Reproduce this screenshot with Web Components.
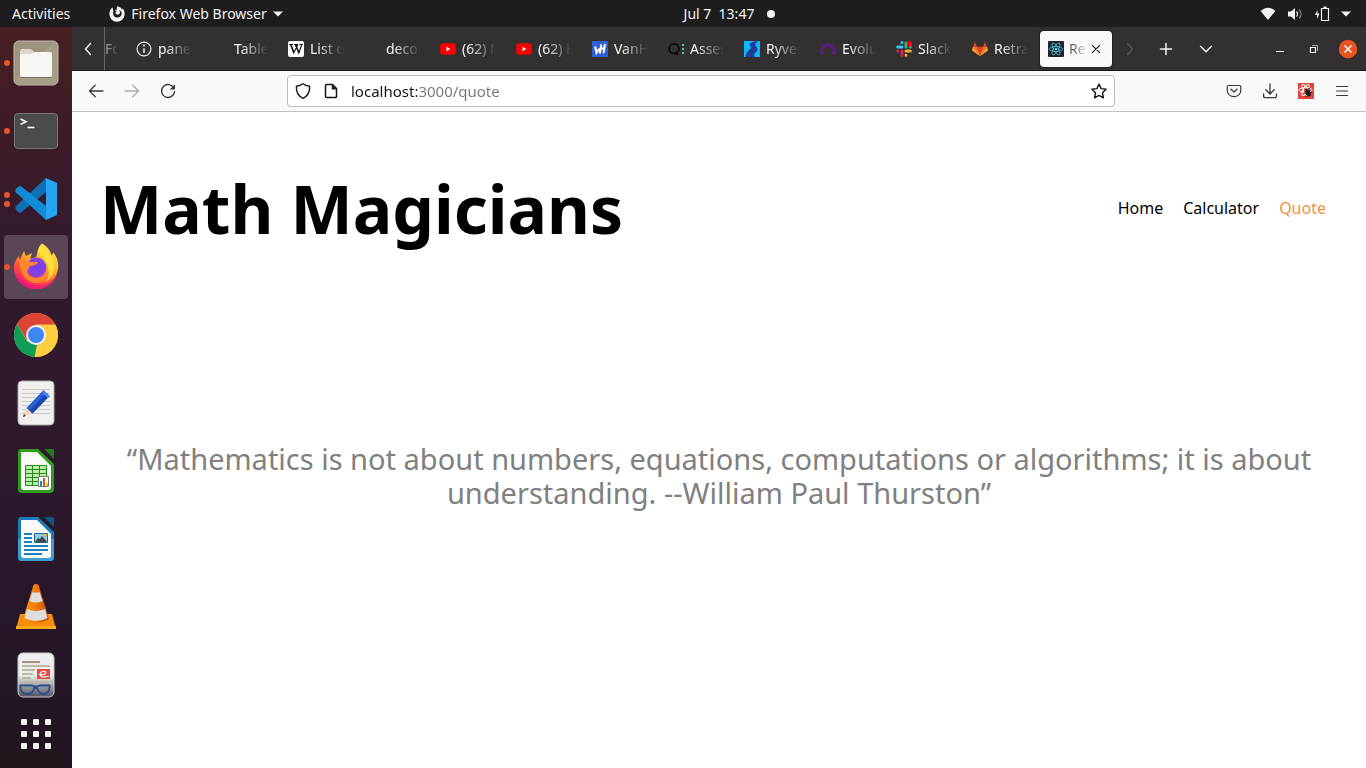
<!DOCTYPE html>
<html lang="en">
<head>
<meta charset="utf-8">
<meta name="viewport" content="width=device-width, initial-scale=1">
<title>Math Magicians</title>
<style>
  html, body { height: 100%; margin: 0; }
  body { font-family: "Noto Sans", "Open Sans", sans-serif; font-size: 14px; }
</style>
</head>
<body>
<desktop-shell></desktop-shell>

<script>
const ICONS = {
  back: ['0 0 16 16', '<path d="M7.2 2.2 1.5 8l5.700 5.800M1.500 8H15" fill="none" stroke="currentColor" stroke-width="1.300" stroke-linecap="round" stroke-linejoin="round"/>'],
  forward: ['0 0 16 16', '<path d="M8.800 2.200 14.500 8l-5.700 5.800M14.500 8H1" fill="none" stroke="currentColor" stroke-width="1.300" stroke-linecap="round" stroke-linejoin="round"/>'],
  reload: ['0 0 16 16', '<path d="M13.800 5A6.500 6.500 0 1 0 14.500 8.800" fill="none" stroke="currentColor" stroke-width="1.400" stroke-linecap="round"/><path d="M15 1.200V6.500H9.700z" fill="currentColor"/>'],
  shield: ['0 0 16 16', '<path d="M8 .8C10 2.300 12 3 14.600 3.300 15 8.600 13 13 8 15.300 3 13 1 8.600 1.400 3.300 4 3 6 2.300 8 .8z" fill="none" stroke="currentColor" stroke-width="1.400" stroke-linejoin="round"/>'],
  page: ['0 0 16 16', '<path d="M3.500 1.500h6l4 4v8a1 1 0 0 1-1 1h-9a1 1 0 0 1-1-1v-11a1 1 0 0 1 1-1z" fill="none" stroke="currentColor" stroke-width="1.500"/><path d="M8.800 1.500v5h5z" fill="currentColor"/>'],
  star: ['0 0 16 16', '<path d="m8 1.100 2.100 4.500 5 .7-3.600 3.500.9 5L8 12.400l-4.400 2.400.9-5L.9 6.300l5-.7z" fill="none" stroke="currentColor" stroke-width="1.400" stroke-linejoin="round"/>'],
  pocket: ['0 0 16 16', '<path d="M2.500 2.500h11a1.300 1.300 0 0 1 1.300 1.300v4a6.800 5.800 0 0 1-13.600 0v-4a1.300 1.300 0 0 1 1.300-1.300z" fill="none" stroke="currentColor" stroke-width="1.200"/><path d="M5 6.300 8 9l3-2.700" fill="none" stroke="currentColor" stroke-width="1.300" stroke-linecap="round" stroke-linejoin="round"/>'],
  download: ['0 0 16 16', '<path d="M8 .8v10M3.800 6.800 8 11l4.200-4.200M1.600 11v2.200a1.400 1.400 0 0 0 1.400 1.400h10a1.400 1.400 0 0 0 1.400-1.400V11" fill="none" stroke="currentColor" stroke-width="1.300" stroke-linecap="round" stroke-linejoin="round"/>'],
  menu: ['0 0 16 16', '<path d="M2.500 3.500h11M2.500 8h11M2.500 12.500h11" fill="none" stroke="currentColor" stroke-width="1.200" stroke-linecap="round"/>'],
  extension: ['0 0 16 16', '<path fill="#e0443a" d="M0 0h16v16H0z"/><g fill="none" stroke="#fff" stroke-width="1"><ellipse cx="7.500" cy="7" rx="6.500" ry="2.400"/><ellipse cx="7.500" cy="7" rx="6" ry="2.300" transform="rotate(60 7.500 7)"/><ellipse cx="7.500" cy="7" rx="6" ry="2.300" transform="rotate(-60 7.500 7)"/></g><path d="m7 7 2-1.500 2.500 2 1.500 3-.5 2.500-2.500.5L7.500 11z" fill="#241614"/><path d="m6 9.500 2 1m2-4.500 2-1m0 5 2-1m-5.500 4-1 1" stroke="#241614"/>'],
  left: ['0 0 16 16', '<path d="m10.500 2.500-5 5.500 5 5.500" fill="none" stroke="currentColor" stroke-width="1.400" stroke-linecap="round" stroke-linejoin="round"/>'],
  right: ['0 0 16 16', '<path d="m5.500 2.500 5 5.500-5 5.500" fill="none" stroke="currentColor" stroke-width="1.400" stroke-linecap="round" stroke-linejoin="round"/>'],
  down: ['0 0 16 16', '<path d="m2.500 5.200 5.500 5.500 5.500-5.500" fill="none" stroke="currentColor" stroke-width="1.400" stroke-linecap="round" stroke-linejoin="round"/>'],
  plus: ['0 0 16 16', '<path d="M8 2.500v11M2.500 8h11" fill="none" stroke="currentColor" stroke-width="1.500" stroke-linecap="round"/>'],
  minimize: ['0 0 16 16', '<path d="M4 10h8v1H4z" fill="currentColor"/>'],
  restore: ['0 0 16 16', '<path d="M4.500 6.500h5v5h-5z" fill="none" stroke="currentColor" stroke-width="1.200"/><path d="M6 4.500h5.500V10" fill="none" stroke="currentColor" stroke-opacity=".6"/>'],
  close: ['0 0 18 18', '<circle cx="9" cy="9" r="9.200" fill="#e95420"/><path d="m5.500 5.500 7 7m0-7-7 7" stroke="#fff" stroke-width="1.500"/>'],
  cross: ['0 0 16 16', '<path d="m4.300 4.300 7.400 7.400m0-7.400-7.400 7.400" stroke="currentColor" stroke-width="1.100" stroke-linecap="round"/>'],
  caret: ['0 0 10 6', '<path d="M0 .5h10L5 5.500z" fill="currentColor"/>'],
  wifi: ['0 0 16 16', '<path d="M.6 4.900Q8-1.200 15.400 4.900L8 14z" fill="currentColor"/>'],
  volume: ['0 0 16 16', '<path d="M1 5.500h3L8 2v12l-4-3.500H1z" fill="currentColor"/><path d="M9.500 5.500a3.500 3.500 0 0 1 0 5" fill="none" stroke="currentColor" stroke-width="1.200"/><path d="M12 3.500a6 6 0 0 1 0 9" fill="none" stroke="currentColor" stroke-opacity=".5" stroke-width="1.200"/>'],
  battery: ['0 0 16 16', '<path d="M7.500 2.500h7v12h-7z" fill="none" stroke="currentColor" stroke-width="1.200"/><path d="M9.500.5h3v2h-3zM3.500 4 1 9h2v4l2.500-5.500h-2z" fill="currentColor"/>'],
  firefoxMono: ['0 0 16 16', '<path d="M8.500.3c-1 1-.9 2.200-.4 3.100-1.600-.1-2.300.7-2.400 1.400h2.200c-.3.800-1.500 1-1.400 2 0 2.400 4 2.200 4.400.1.300-1.400-.5-2-1.200-2.300 1.500-.2 3 .9 3 3 0 2-1.500 3.800-3.900 4C6.200 11.700 4 10 4.200 7.200 4.200 5.300 4.500 3 3.400 1.500 1.500 2.800.3 5.500.4 8a7.600 7.600 0 0 0 15.200.4c.1-2.500-.7-4.800-2.200-6.300.2.800.2 1.200 0 1.900C12.300 1.700 10.100.6 8.500.3z" fill="currentColor"/>'],
  info: ['0 0 16 16', '<circle cx="8" cy="8" r="6.900" fill="none" stroke="currentColor" stroke-width="1.200"/><path d="M8 7.200V12" stroke="currentColor" stroke-width="1.500"/><circle cx="8" cy="4.600" r="1" fill="currentColor"/>'],
  wiki: ['0 0 16 16', '<rect width="16" height="16" rx="2" fill="#fff"/><path d="M1.200 3.500h4M6.200 3.500h4M11.500 3.500h3.300M2.500 3.500l3.200 8.500L9.700 4M7.300 3.500l3.500 8.500L13.800 3.500" fill="none" stroke="#111" stroke-width="1.100"/><path d="m2.800 3.500 3.200 8M7.500 3.500l3.400 8" stroke="#111" stroke-width="1.300"/>'],
  youtube: ['0 0 16 16', '<rect x=".2" y="2.300" width="15.600" height="11.400" rx="3" fill="#f00"/><path d="M6.500 5.700v4.600L10.300 8z" fill="#fff"/>'],
  hack: ['0 0 16 16', '<path fill="#2e5fd3" d="M0 0h16v16H0z"/><path d="M3.200 5.500 4.500 12 7.500 7.500M9.300 3.500 7.800 12.500M13 3 11.500 12.200M8.500 8.500 12 6.500" fill="none" stroke="#fff" stroke-width="2"/>'],
  quality: ['0 0 16 16', '<circle cx="6" cy="7.800" r="4.900" fill="none" stroke="#080808" stroke-width="1.700"/><path d="m6.500 11 3.500 2.800" stroke="#080808" stroke-width="1.500"/><path d="M14 3h2v2h-2zM14 7h2v2h-2zM14 11h2v2h-2z" fill="#41d77a"/>'],
  ryver: ['0 0 16 16', '<path fill="#06b9fc" d="M0 0h16v16H0z"/><path d="M15 0C7 0 4 3 6.500 5.500 9 8 2 9 1.500 16H11c-3-4 3-5 2.500-8S8 4 15 0z" fill="#233d94"/>'],
  arc: ['0 0 16 16', '<path d="M2 13.500V10a6 6 0 0 1 12 0v3.500" fill="none" stroke="#621b86" stroke-width="3.400" stroke-dasharray="3 .7"/>'],
  slack: ['0 0 16 16', '<g stroke-width="3" stroke-linecap="round"><path d="M6 1.600v0M6 6H1.700" stroke="#36c5f0"/><path d="M10 2v4M14.300 6v0" stroke="#2eb67d"/><path d="M10 10h4.300M10 14.300v0" stroke="#ecb22e"/><path d="M1.700 10v0M6 10v4.300" stroke="#e01e5a"/></g><circle cx="13.500" cy="2.700" r="2.700" fill="#f00"/>'],
  gitlab: ['0 0 16 16', '<path d="m8 15 3-9.200H5z" fill="#e24329"/><path d="M8 15 .2 9.400 1 5.800h4zM8 15l7.800-5.600-.8-3.600h-4z" fill="#fc6d26"/><path d="M8 15 .1 9.600l.9-3.700zM8 15l7.900-5.400-.9-3.700z" fill="#fca326"/><path d="M3 1 1 6h4zM13 1l2 5h-4z" fill="#e24329"/>'],
  react: ['0 0 16 16', '<rect width="16" height="16" rx="1" fill="#20232a"/><g fill="none" stroke="#4bbbd5" stroke-width=".8"><ellipse cx="8" cy="8" rx="6.700" ry="2.500"/><ellipse cx="8" cy="8" rx="6.700" ry="2.500" transform="rotate(60 8 8)"/><ellipse cx="8" cy="8" rx="6.700" ry="2.500" transform="rotate(-60 8 8)"/></g><circle cx="8" cy="8" r="1.300" fill="#61dafb"/>'],
  blank: ['0 0 16 16', ''],

  files: ['0 0 48 48', '<rect x="2" y="2" width="44" height="44" rx="5" fill="#9d947f" stroke="#c2bba9"/><path d="M3 40 42 3h3v42H3z" fill="#aba38e" opacity=".6"/><path d="M8 12a2 2 0 0 1 2-2h9l4 4v6H8z" fill="#dbd7c9"/><path d="M8 17q0-2 2-2h9l4-2h15q2 0 2 2v21q0 2-2 2H10q-2 0-2-2z" fill="#f8f7f5"/><path d="M9 38.500h30" stroke="#77705f"/>'],
  terminal: ['0 0 48 48', '<rect x="2.500" y="6.500" width="43" height="35" rx="3.500" fill="#4b4b4b" stroke="#777"/><path d="m8.500 12 5.500 2.700-5.500 2.700" fill="none" stroke="#fff" stroke-width="1.600"/><path d="M15.500 20.500h7" stroke="#fff" stroke-width="1.600"/>'],
  vscode: ['0 0 48 48', '<path d="M34 3 3.500 31.500v3L7 37.500q1 .5 2 0L34 17z" fill="#0f6fb5"/><path d="M34 45 3.500 17v-3L7 11.300q1-.5 2 0L34 31z" fill="#128bd5"/><path d="M34 3 45 8v32l-11 5z" fill="#26a5f2"/>'],
  firefox: ['0 0 48 48', '<defs><linearGradient id="fa" x1=".85" y1="0" x2=".25" y2="1"><stop stop-color="#fff14a"/><stop offset=".45" stop-color="#ffab27"/><stop offset=".7" stop-color="#ff5038"/><stop offset="1" stop-color="#f0147c"/></linearGradient><radialGradient id="fb"><stop stop-color="#713ee8"/><stop offset="1" stop-color="#8f43dc"/></radialGradient></defs><path d="M30 .5c7 4 9 9 9.500 12l2-3C45 14 47 20 46 26c-2 13-11 20-22 20C11 46 2 36 2 26c0-6 2-10 5-13l.500 4L12 8l2 5 6-3-2 6 6-2c2-3 0-7 6-13.500z" fill="url(#fa)"/><path d="M2.500 29C5 40 14 46 24 46c12 0 20-7 22-18-5 12-15 16-24 14S7 36 2.500 29z" fill="#ef137d" opacity=".65"/><circle cx="24.500" cy="24.500" r="10" fill="url(#fb)"/><path d="M8 17q6-1 9 2h9q-2 4-8 4l-3 5q1 7 9 7 9 0 11-9 2 15-11 14C12 39 7 28 8 17z" fill="#ff862f"/><path d="M29 1q-4 6-2 10 6 4 9 13 3 10-4 16 12-7 10-19C41 11 33 8 29 1z" fill="#ffe63f" opacity=".8"/>'],
  chrome: ['0 0 48 48', '<circle cx="24" cy="24" r="22" fill="#ffcd40"/><path d="M24 2a22 22 0 0 1 19.300 11.500H24l-9 16L5 13A22 22 0 0 1 24 2z" fill="#db4437"/><path d="M4.900 13 14.900 30 25 34l-2.500 12A22 22 0 0 1 4.900 13z" fill="#0f9d58"/><path d="M24 14h19.500A22 22 0 0 1 22.500 46l10-17z" fill="#ffcd40"/><circle cx="24" cy="24" r="10" fill="#f1f1f1"/><circle cx="24" cy="24" r="8" fill="#4285f4"/>'],
  editor: ['0 0 48 48', '<rect x="6" y="2" width="36" height="44" rx="4" fill="#f0f0ef" stroke="#aaa"/><path d="M10 10.500h28M10 14.500h28M10 18.500h28M10 22.500h28M10 26.500h28M10 30.500h28M10 34.500h28" stroke="#c9c9c9"/><path d="m11 38 3.500-9 4.500 5z" fill="#f3d1b2"/><path d="m11 38 1-3 1.700 2z" fill="#333"/><path d="m14.500 29 17-18 6 6-17 17.500z" fill="#2b61d6"/><path d="m17.500 31.500 17-17.500 3 3-17 17.500z" fill="#1b46ab"/><path d="m29.500 13 2-2 6 6-2 2z" fill="#4a83f4"/>'],
  calc: ['0 0 48 48', '<path d="M9 2h17l16 15v25q0 4-4 4H10q-4 0-4-4V6q0-4 3-4z" fill="#2f9e1c"/><path d="M9 5h16l14 14v21q0 3-3 3H12q-3 0-3-3z" fill="#fafafa"/><path d="M32 2h8q2 0 2 2v8z" fill="#227b13"/><path d="M13 18h22v20H13z" fill="#baf0a9"/><path d="M13.500 18.500h21v20h-21zM13 22.500h22M13 26.500h22M13 30.500h22M13 34.500h22M20.500 18v20M27.500 18v20" fill="none" stroke="#26871a"/><path d="M26.500 29.500h10v10h-10z" fill="#fff" stroke="#777"/><path d="M28 34h2v5h-2z" fill="#1c87c7"/><path d="M31 31h2v8h-2z" fill="#d85b13"/><path d="M34 36h2v3h-2z" fill="#f4ba1c"/>'],
  writer: ['0 0 48 48', '<path d="M9 2h17l16 15v25q0 4-4 4H10q-4 0-4-4V6q0-4 3-4z" fill="#187db9"/><path d="M6 24h36v18q0 4-4 4H10q-4 0-4-4z" fill="#3b9ed1"/><path d="M9 5h16l14 14v21q0 3-3 3H12q-3 0-3-3z" fill="#fafafa"/><path d="M32 2h8q2 0 2 2v8z" fill="#0b5885"/><path d="M12 19h8M12 23h8M12 27h8M12 31h24M12 35h24M12 39h18" stroke="#1c82bf" stroke-width="2"/><path d="M22.500 18.500h13v9h-13z" fill="#8dc9e9" stroke="#156b9e"/><path d="m23 27 3-4 2 1 2-3 5 6z" fill="#444"/><path d="M31 19h4v3z" fill="#f5bd23"/>'],
  vlc: ['0 0 48 48', '<defs><linearGradient id="va"><stop stop-color="#f89a1c"/><stop offset=".5" stop-color="#f47b08"/><stop offset="1" stop-color="#bd5000"/></linearGradient></defs><path d="M8 31h32l4 15H4z" fill="#f98c0a"/><path d="M4 43h40v3H4z" fill="#ffab19"/><path d="M21.500 2q2.500-2 5 0L37 36q-13 8-26 0z" fill="url(#va)"/><path d="m20.500 9q3.500 1.500 7 0l3 9q-6.500 3-13 0zM15 26q9 4 18 0l2.500 9q-11.500 6-23 0z" fill="#dedede"/>'],
  viewer: ['0 0 48 48', '<defs><linearGradient id="pa" x2="0" y2="1"><stop offset=".5" stop-color="#eee"/><stop offset="1" stop-color="#545059"/></linearGradient></defs><rect x="6" y="2" width="36" height="44" rx="5" fill="url(#pa)" stroke="#c7c7c7"/><path d="M10 11h18" stroke="#9e9680" stroke-width="2"/><path d="M10 15h28M10 19h13M10 23h11M10 27h9M10 31h28" stroke="#bdb7a7" stroke-width="2"/><path d="M25 18h13v10H25z" fill="#e94b42"/><path d="M27 23.500h5q3-1 1-3-4-1-5 3 1 4 9 1.500" fill="none" stroke="#fff" stroke-width="1.200"/><path d="M8 34.500h12l3 1h2l3-1h10M8 34l1 5q1 4 7 4 5 0 6-6h3q2 6 6 6 5 0 6-4l1-5" fill="none" stroke="#294e94" stroke-width="1.800"/>'],
  apps: ['0 0 48 48', '<g fill="#f3f1ed"><rect x="9" y="9" width="6" height="6" rx="1"/><rect x="21" y="9" width="6" height="6" rx="1"/><rect x="33" y="9" width="6" height="6" rx="1"/><rect x="9" y="21" width="6" height="6" rx="1"/><rect x="21" y="21" width="6" height="6" rx="1"/><rect x="33" y="21" width="6" height="6" rx="1"/><rect x="9" y="33" width="6" height="6" rx="1"/><rect x="21" y="33" width="6" height="6" rx="1"/><rect x="33" y="33" width="6" height="6" rx="1"/></g>']
};

const define = (name, render) => customElements.define(name, class extends HTMLElement {
  connectedCallback() {
    if (this.shadowRoot) return;
    this.attachShadow({ mode: 'open' }).innerHTML = render(this);
  }
});

define('ui-icon', el => {
  const [box, art] = ICONS[el.getAttribute('name')];
  return `<style>
    :host { display: block; width: var(--icon-width, 16px); height: var(--icon-height, var(--icon-width, 16px)); flex: none; }
    svg { display: block; width: 100%; height: 100%; overflow: visible; }
  </style><svg viewBox="${box}" aria-hidden="true">${art}</svg>`;
});

define('icon-button', el => `<style>
    :host { display: block; flex: none; width: 36px; }
    button { display: flex; align-items: center; justify-content: center; width: 100%; height: 32px; padding: 0; border: 0; background: none; color: inherit; }
  </style><button type="button" aria-label="${el.getAttribute('label')}"><ui-icon name="${el.getAttribute('name')}"></ui-icon></button>`);

define('top-panel', () => `<style>
    :host { display: grid; grid-template-columns: 1fr auto 1fr; align-items: center; height: 27px; padding: 0 15px 0 12px; background: #1d1d1d; color: #f2f2f2; line-height: 27px; }
    button { display: flex; align-items: center; gap: 6px; padding: 0; border: 0; background: none; color: inherit; font: inherit; white-space: pre; }
    .start { display: flex; gap: 39px; }
    .caret { --icon-width: 10px; --icon-height: 6px; }
    .clock { gap: 13px; padding-left: 96px; }
    .dot { width: 8px; height: 8px; border-radius: 50%; background: #f2f2f2; }
    .status { justify-self: end; gap: 11px; }
  </style>
  <div class="start">
    <button type="button">Activities</button>
    <button type="button"><ui-icon name="firefoxMono"></ui-icon>Firefox Web Browser<ui-icon class="caret" name="caret"></ui-icon></button>
  </div>
  <button type="button" class="clock">Jul 7  13:47<span class="dot"></span></button>
  <button type="button" class="status" aria-label="System menu"><ui-icon name="wifi"></ui-icon><ui-icon name="volume"></ui-icon><ui-icon name="battery"></ui-icon><ui-icon class="caret" name="caret"></ui-icon></button>`);

define('dock-item', el => {
  const dots = '<i></i>'.repeat(+el.getAttribute('windows') || 0);
  return `<style>
    :host { display: block; position: relative; height: 64px; --icon-width: 48px; }
    :host([active]) { background: #5b4658; border-radius: 4px; }
    :host([short]) { height: 46px; margin-top: auto; }
    button { display: flex; align-items: center; justify-content: center; width: 100%; height: 100%; padding: 0; border: 0; background: none; }
    .dots { position: absolute; left: 0; top: 0; bottom: 0; display: flex; flex-direction: column; justify-content: center; gap: 3px; }
    i { width: 6px; height: 6px; border-radius: 50%; background: #e95420; }
  </style><button type="button" aria-label="${el.getAttribute('label')}"><ui-icon name="${el.getAttribute('name')}"></ui-icon></button><div class="dots">${dots}</div>`;
});

define('app-dock', () => `<style>
    :host { display: flex; flex-direction: column; gap: 4px; box-sizing: border-box; padding: 4px 4px 11px; background: linear-gradient(#471f22, #3d1c28 14%, #331a2e 28%, #2f192d 55%, #27172a 80%, #20141c); }
  </style>
  <dock-item name="files" label="Files" windows="1"></dock-item>
  <dock-item name="terminal" label="Terminal" windows="1"></dock-item>
  <dock-item name="vscode" label="Visual Studio Code" windows="2"></dock-item>
  <dock-item name="firefox" label="Firefox" windows="1" active></dock-item>
  <dock-item name="chrome" label="Chrome"></dock-item>
  <dock-item name="editor" label="Text Editor"></dock-item>
  <dock-item name="calc" label="LibreOffice Calc"></dock-item>
  <dock-item name="writer" label="LibreOffice Writer"></dock-item>
  <dock-item name="vlc" label="VLC"></dock-item>
  <dock-item name="viewer" label="Document Viewer"></dock-item>
  <dock-item name="apps" label="Show Applications" short></dock-item>`);

define('browser-tab', el => `<style>
    :host { display: block; flex: none; width: 72px; height: 36px; margin: 0 2px; }
    :host([partial]) { width: 21px; margin: 0; overflow: hidden; }
    button { display: flex; align-items: center; gap: 6px; width: 100%; height: 100%; padding: 0 8px; border: 0; border-radius: 4px; background: none; color: #f5f5f5; font: inherit; text-align: left; }
    .title { flex: 1; min-width: 0; overflow: hidden; white-space: nowrap; -webkit-mask-image: linear-gradient(to right, #000 20%, transparent); mask-image: linear-gradient(to right, #000 20%, transparent); }
    :host([selected]) button { gap: 5px; background: #f9f9fa; color: #15141a; box-shadow: 0 0 2px #000; }
    :host([selected]) .title { -webkit-mask-image: linear-gradient(to right, #000a 30%, transparent); mask-image: linear-gradient(to right, #000a 30%, transparent); }
    :host([selected]) .title + ui-icon { margin-left: -4px; }
    :host([selected]) button { padding-right: 8px; }
    :host([partial]) button { padding: 0; }
    :host([partial]) .title { max-width: 14px; opacity: .5; }
  </style><button type="button" role="tab">${el.hasAttribute('partial') ? '' : `<ui-icon name="${el.getAttribute('name')}"></ui-icon>`}<span class="title"><slot></slot></span>${el.hasAttribute('selected') ? '<ui-icon name="cross"></ui-icon>' : ''}</button>`);

define('tab-strip', () => `<style>
    :host { display: flex; align-items: center; box-sizing: border-box; height: 44px; border-bottom: 1px solid #1b191b; background: #333032; color: #f5f5f5; }
    .prev { width: 32px; }
    .tabs { display: flex; align-items: center; flex: 0 1 1009px; min-width: 0; height: 43px; overflow: hidden; border-left: 1px solid #666; }
    .next { color: #5a585a; width: 32px; }
    .new { width: 40px; }
    .list { width: 40px; }
    .window { display: flex; align-items: center; margin-left: auto; padding-right: 1px; }
    .window icon-button { width: 34px; }
    .close { --icon-width: 18px; }
  </style>
  <icon-button class="prev" name="left" label="Scroll tabs left"></icon-button>
  <div class="tabs" role="tablist">
    <browser-tab partial>Fo</browser-tab>
    <browser-tab name="info">panel</browser-tab>
    <browser-tab name="blank">Table</browser-tab>
    <browser-tab name="wiki">List of</browser-tab>
    <browser-tab name="blank">decor</browser-tab>
    <browser-tab name="youtube">(62) M</browser-tab>
    <browser-tab name="youtube">(62) H</browser-tab>
    <browser-tab name="hack">VanHa</browser-tab>
    <browser-tab name="quality">Asses</browser-tab>
    <browser-tab name="ryver">Ryver</browser-tab>
    <browser-tab name="arc">Evolu</browser-tab>
    <browser-tab name="slack">Slack</browser-tab>
    <browser-tab name="gitlab">Retra</browser-tab>
    <browser-tab name="react" selected>Rea</browser-tab>
  </div>
  <icon-button class="next" name="right" label="Scroll tabs right"></icon-button>
  <icon-button class="new" name="plus" label="New tab"></icon-button>
  <icon-button class="list" name="down" label="List all tabs"></icon-button>
  <div class="window">
    <icon-button name="minimize" label="Minimize"></icon-button>
    <icon-button name="restore" label="Restore"></icon-button>
    <icon-button class="close" name="close" label="Close"></icon-button>
  </div>`);

define('nav-bar', () => `<style>
    :host { display: flex; align-items: center; box-sizing: border-box; height: 41px; padding: 0 6px; border-bottom: 1px solid #c2c2c2; background: #f9f9fa; color: #3a3a3f; }
    .spacer { flex: 101; }
    .url { display: flex; align-items: center; flex: 812; box-sizing: border-box; height: 32px; padding: 0 7px; gap: 12px; border: 1px solid #bdbdbd; border-radius: 4px; background: #fff; color: #15141a; }
    .off { color: #adadad; }
    input { flex: 1; min-width: 0; height: 28px; padding: 0; border: 0; outline: 0; font: inherit; font-size: 15px; line-height: 28px; color: #777; -webkit-text-fill-color: transparent; background: linear-gradient(to right, #15141a 66px, #77767b 66px); -webkit-background-clip: text; background-clip: text; }
  </style>
  <icon-button name="back" label="Back"></icon-button>
  <icon-button class="off" name="forward" label="Forward"></icon-button>
  <icon-button name="reload" label="Reload"></icon-button>
  <span class="spacer"></span>
  <div class="url">
    <ui-icon name="shield"></ui-icon><ui-icon name="page"></ui-icon>
    <input type="text" aria-label="Address" value="localhost:3000/quote">
    <ui-icon name="star"></ui-icon>
  </div>
  <span class="spacer"></span>
  <icon-button name="pocket" label="Save to Pocket"></icon-button>
  <icon-button name="download" label="Downloads"></icon-button>
  <icon-button name="extension" label="React Developer Tools"></icon-button>
  <icon-button name="menu" label="Menu"></icon-button>`);

define('site-header', () => `<style>
    :host { display: flex; align-items: center; justify-content: space-between; padding: 48px 40px 48px 28px; color: #000; }
    h1 { margin: 0; font-size: 66px; line-height: 96px; font-weight: 700; white-space: nowrap; }
    nav { display: flex; gap: 20px; font-size: 16px; line-height: 24px; }
    a { color: inherit; text-decoration: none; }
    a[aria-current] { color: #f5913e; }
  </style>
  <h1>Math Magicians</h1>
  <nav><a href="#home">Home</a><a href="#calculator">Calculator</a><a href="#quote" aria-current="page">Quote</a></nav>`);

define('quote-view', () => `<style>
    :host { display: block; padding: 138px 40px 40px; }
    p { margin: 0; color: #808080; font-size: 29px; line-height: 34px; text-align: center; }
  </style>
  <p><slot></slot></p>`);

define('desktop-shell', () => `<style>
    :host { display: grid; grid-template: auto 1fr / 72px minmax(0, 1fr); min-height: 100vh; background: #fff; }
    top-panel { grid-column: 1 / -1; }
  </style>
  <top-panel></top-panel>
  <app-dock></app-dock>
  <main>
    <tab-strip></tab-strip>
    <nav-bar></nav-bar>
    <site-header></site-header>
    <quote-view>“Mathematics is not about numbers, equations, computations or algorithms; it is about understanding. --William Paul Thurston”</quote-view>
  </main>`);
</script>
</body>
</html>
